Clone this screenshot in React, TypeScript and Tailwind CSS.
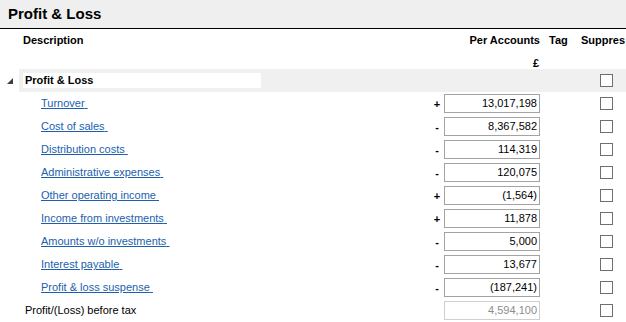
import React from "react";

type Line = { label: string; sign: "+" | "-"; amount: string };

const lines: Line[] = [
    {label: "Turnover", sign: "+", amount: "13,017,198"},
    {label: "Cost of sales", sign: "-", amount: "8,367,582"},
    {label: "Distribution costs", sign: "-", amount: "114,319"},
    {label: "Administrative expenses", sign: "-", amount: "120,075"},
    {label: "Other operating income", sign: "+", amount: "(1,564)"},
    {label: "Income from investments", sign: "+", amount: "11,878"},
    {label: "Amounts w/o investments", sign: "-", amount: "5,000"},
    {label: "Interest payable", sign: "-", amount: "13,677"},
    {label: "Profit & loss suspense", sign: "-", amount: "(187,241)"},
];

const Check = () => (
    <div className="w-[13px] h-[13px] border border-[#6f6f6f] bg-white"></div>
);

const App = () => {
    return (
        <div className="w-[626px] h-[322px] overflow-hidden bg-white text-[11px] text-black font-['Liberation_Sans',Arial,sans-serif]">
            <div className="h-[28px] bg-[#efefef] border-b border-black flex items-center pl-[8px] box-content">
                <h1 className="text-[15px] font-bold">Profit &amp; Loss</h1>
            </div>

            {/* column headers */}
            <div className="flex h-[40px] font-bold">
                <div className="w-[444px] pl-[23px] pt-[3px]">Description</div>
                <div className="w-[96px] text-right pt-[3px]">
                    <div className="whitespace-nowrap -ml-[20px]">Per Accounts</div>
                    <div className="mt-[6px] pr-[1px]">£</div>
                </div>
                <div className="w-[41px] pl-[9px] pt-[3px]">Tag</div>
                <div className="w-[45px] pt-[3px] whitespace-nowrap overflow-hidden">Suppres</div>
            </div>

            {/* group row */}
            <div className="flex h-[23px] items-center">
                <div className="w-[19px] h-full flex items-center justify-center">
                    <svg width="6" height="6" viewBox="0 0 6 6" className="ml-[1px] mt-[1px]">
                        <polygon points="6,0 6,6 0,6" fill="#404040"/>
                    </svg>
                </div>
                <div className="flex-1 h-full bg-[#f0f0f0] flex items-center">
                    <div className="ml-[4px] w-[238px] h-[15px] bg-white flex items-center pl-[2px] font-bold">
                        Profit &amp; Loss
                    </div>
                    <div className="ml-auto mr-[13px]"><Check/></div>
                </div>
            </div>

            {lines.map((l, i) => (
                <div key={i} className="flex h-[23px] items-center">
                    <div className="w-[430px] pl-[41px]">
                        <a href="#" className="text-[#1c5fae] underline whitespace-pre">{l.label} </a>
                    </div>
                    <div className="w-[14px] font-bold text-center pt-[2px]">{l.sign === "+" ? "+" : "-"}</div>
                    <div className="w-[96px] h-[19px] border border-[#a3a3a3] text-right pr-[2px] leading-[17px]">
                        {l.amount}
                    </div>
                    <div className="w-[60px]"></div>
                    <Check/>
                </div>
            ))}

            <div className="flex h-[23px] items-center">
                <div className="w-[444px] pl-[25px]">Profit/(Loss) before tax</div>
                <div className="w-[96px] h-[19px] border border-[#cfcfcf] text-right pr-[2px] leading-[17px] text-[#8c8c8c]">
                    4,594,100
                </div>
                <div className="w-[60px]"></div>
                <Check/>
            </div>
        </div>
    );
};

export default App;
